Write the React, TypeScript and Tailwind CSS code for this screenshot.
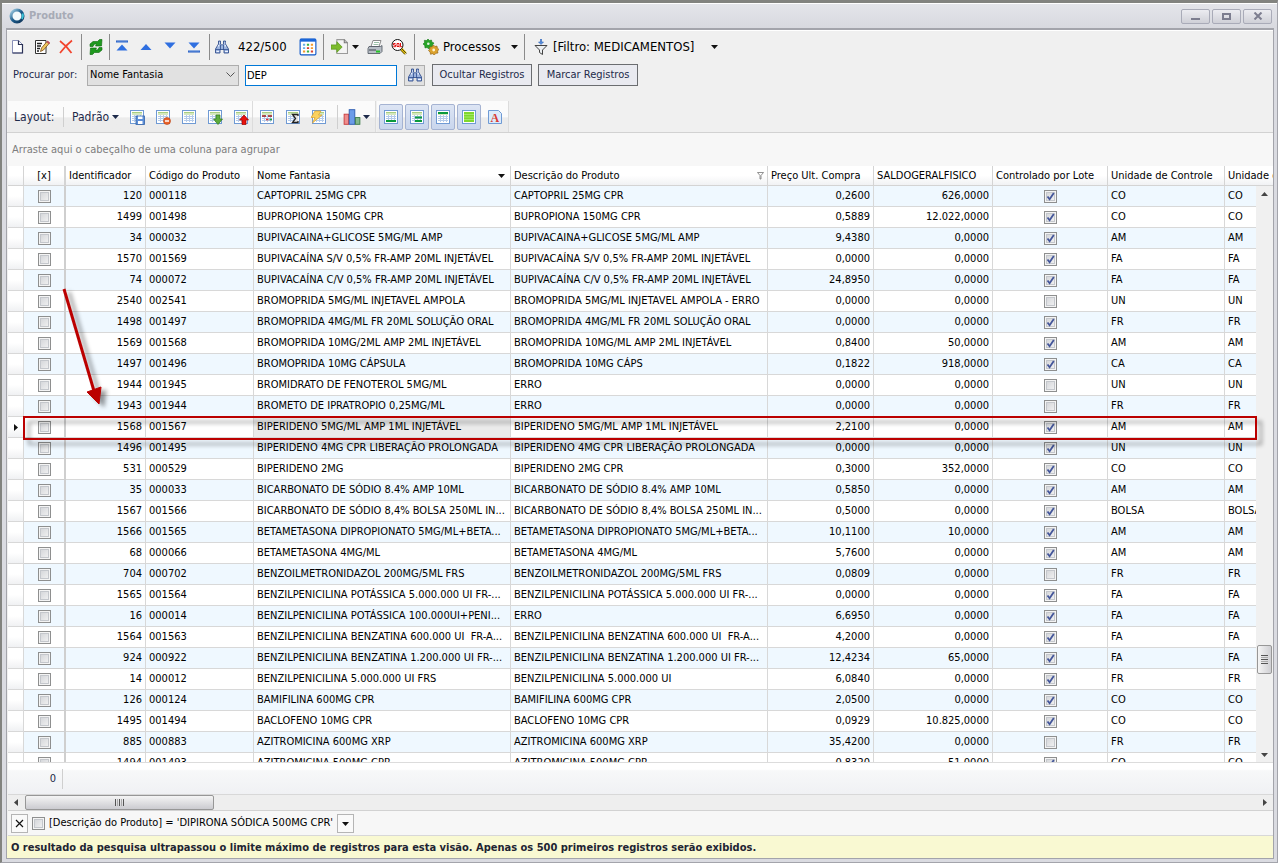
import { useState } from "react";
import type { ReactNode } from "react";

type Row = [id: string, code: string, name: string, desc: string, price: string, stock: string, lot: boolean, unit: string];

const rows: Row[] = [
  ["120", "000118", "CAPTOPRIL 25MG CPR", "CAPTOPRIL 25MG CPR", "0,2600", "626,0000", true, "CO"],
  ["1499", "001498", "BUPROPIONA 150MG CPR", "BUPROPIONA 150MG CPR", "0,5889", "12.022,0000", true, "CO"],
  ["34", "000032", "BUPIVACAINA+GLICOSE 5MG/ML AMP", "BUPIVACAINA+GLICOSE 5MG/ML AMP", "9,4380", "0,0000", true, "AM"],
  ["1570", "001569", "BUPIVACAÍNA S/V 0,5% FR-AMP 20ML INJETÁVEL", "BUPIVACAÍNA S/V 0,5% FR-AMP 20ML INJETÁVEL", "0,0000", "0,0000", true, "FA"],
  ["74", "000072", "BUPIVACAÍNA C/V 0,5% FR-AMP 20ML INJETÁVEL", "BUPIVACAÍNA C/V 0,5% FR-AMP 20ML INJETÁVEL", "24,8950", "0,0000", true, "FA"],
  ["2540", "002541", "BROMOPRIDA 5MG/ML INJETAVEL AMPOLA", "BROMOPRIDA 5MG/ML INJETAVEL AMPOLA - ERRO", "0,0000", "0,0000", false, "UN"],
  ["1498", "001497", "BROMOPRIDA 4MG/ML FR 20ML SOLUÇÃO ORAL", "BROMOPRIDA 4MG/ML FR 20ML SOLUÇÃO ORAL", "0,0000", "0,0000", true, "FR"],
  ["1569", "001568", "BROMOPRIDA 10MG/2ML AMP 2ML INJETÁVEL", "BROMOPRIDA 10MG/ML AMP 2ML INJETÁVEL", "0,8400", "50,0000", true, "AM"],
  ["1497", "001496", "BROMOPRIDA 10MG CÁPSULA", "BROMOPRIDA 10MG CÁPS", "0,1822", "918,0000", true, "CA"],
  ["1944", "001945", "BROMIDRATO DE FENOTEROL 5MG/ML", "ERRO", "0,0000", "0,0000", false, "UN"],
  ["1943", "001944", "BROMETO DE IPRATROPIO 0,25MG/ML", "ERRO", "0,0000", "0,0000", false, "FR"],
  ["1568", "001567", "BIPERIDENO 5MG/ML AMP 1ML INJETÁVEL", "BIPERIDENO 5MG/ML AMP 1ML INJETÁVEL", "2,2100", "0,0000", true, "AM"],
  ["1496", "001495", "BIPERIDENO 4MG CPR LIBERAÇÃO PROLONGADA", "BIPERIDENO 4MG CPR LIBERAÇÃO PROLONGADA", "0,0000", "0,0000", true, "UN"],
  ["531", "000529", "BIPERIDENO 2MG", "BIPERIDENO 2MG CPR", "0,3000", "352,0000", true, "CO"],
  ["35", "000033", "BICARBONATO DE SÓDIO 8.4% AMP 10ML", "BICARBONATO DE SÓDIO 8.4% AMP 10ML", "0,5850", "0,0000", true, "AM"],
  ["1567", "001566", "BICARBONATO DE SÓDIO 8,4% BOLSA 250ML IN...", "BICARBONATO DE SÓDIO 8,4% BOLSA 250ML IN...", "0,5000", "0,0000", true, "BOLSA"],
  ["1566", "001565", "BETAMETASONA DIPROPIONATO 5MG/ML+BETA...", "BETAMETASONA DIPROPIONATO 5MG/ML+BETA...", "10,1100", "10,0000", true, "AM"],
  ["68", "000066", "BETAMETASONA 4MG/ML", "BETAMETASONA 4MG/ML", "5,7600", "0,0000", true, "AM"],
  ["704", "000702", "BENZOILMETRONIDAZOL 200MG/5ML FRS", "BENZOILMETRONIDAZOL 200MG/5ML FRS", "0,0809", "0,0000", false, "FR"],
  ["1565", "001564", "BENZILPENICILINA POTÁSSICA 5.000.000 UI FR-...", "BENZILPENICILINA POTÁSSICA 5.000.000 UI FR-...", "0,0000", "0,0000", true, "FA"],
  ["16", "000014", "BENZILPENICILINA POTÁSSICA 100.000UI+PENI...", "ERRO", "6,6950", "0,0000", true, "FA"],
  ["1564", "001563", "BENZILPENICILINA BENZATINA 600.000 UI  FR-A...", "BENZILPENICILINA BENZATINA 600.000 UI  FR-A...", "4,2000", "0,0000", true, "FA"],
  ["924", "000922", "BENZILPENICILINA BENZATINA 1.200.000 UI FR-...", "BENZILPENICILINA BENZATINA 1.200.000 UI FR-...", "12,4234", "65,0000", true, "FA"],
  ["14", "000012", "BENZILPENICILINA 5.000.000 UI FRS", "BENZILPENICILINA 5.000.000 UI", "6,0840", "0,0000", true, "FR"],
  ["126", "000124", "BAMIFILINA 600MG CPR", "BAMIFILINA 600MG CPR", "2,0500", "0,0000", true, "CO"],
  ["1495", "001494", "BACLOFENO 10MG CPR", "BACLOFENO 10MG CPR", "0,0929", "10.825,0000", true, "CO"],
  ["885", "000883", "AZITROMICINA 600MG XRP", "AZITROMICINA 600MG XRP", "35,4200", "0,0000", false, "FR"],
  ["1494", "001493", "AZITROMICINA 500MG CPR", "AZITROMICINA 500MG CPR", "0,8320", "51,0000", true, "CO"],
];

const SELECTED_ID = "1568";

function Svg({ size = 16, children }: { size?: number; children: ReactNode }) {
  return (
    <svg width={size} height={size} viewBox="0 0 16 16" fill="none" className="shrink-0" aria-hidden="true">
      {children}
    </svg>
  );
}

function Caret({ dir = "down", color = "#111" }: { dir?: "down" | "up" | "left" | "right"; color?: string }) {
  const d = {
    down: "M0 2h7L3.5 6z",
    up: "M0 5h7L3.5 1z",
    left: "M5 0v7L1 3.5z",
    right: "M2 0v7l4-3.5z",
  }[dir];
  return (
    <svg width="7" height="7" viewBox="0 0 7 7" className="shrink-0" aria-hidden="true">
      <path d={d} fill={color} />
    </svg>
  );
}

function Check({ label, defaultChecked = false }: { label: string; defaultChecked?: boolean }) {
  return (
    <label className="inline-grid size-[13px] align-middle">
      <input
        type="checkbox"
        aria-label={label}
        defaultChecked={defaultChecked}
        className="peer col-start-1 row-start-1 m-0 size-[13px] appearance-none border border-[#8e8f8f] bg-linear-to-br from-[#cfd1d5] to-[#f6f6f6] shadow-[inset_0_0_0_1px_#f4f4f4,inset_0_0_0_2px_#c4c7cc]"
      />
      <svg viewBox="0 0 13 13" className="pointer-events-none invisible col-start-1 row-start-1 size-[13px] peer-checked:visible" aria-hidden="true">
        <path d="M3.5 6.500 5.600 9.300 9.800 3" fill="none" stroke="#44569a" strokeWidth="1.8" />
      </svg>
    </label>
  );
}

function Binoculars() {
  return (
    <Svg>
      <path d="M4.500 2h2v3l1 1h1l1-1V2h2v3l3 5v4h-4.500v-3.500H6V14H1.500v-4l3-5z" fill="#9db4de" stroke="#34508e" strokeWidth=".9" />
      <path d="M5 4h1M10.500 4h1M4 7.500l1-1.500M11.500 7.500l-.5-1.500M2.500 12.500h2.500M11 12.500h3" stroke="#eef4ff" strokeWidth="1.2" />
      <path d="M6.500 6v5M9.500 6v5M2 10.500h4M10 10.500h4" stroke="#2d4c8f" strokeWidth=".8" />
    </Svg>
  );
}

// Small spreadsheet used by most of the layout buttons
function Sheet({ children, rowColor = "#a9cf80" }: { children?: ReactNode; rowColor?: string }) {
  return (
    <Svg>
      <rect x="1.5" y="1.5" width="13" height="13" fill="#fff" stroke="#6f9ad4" />
      <path d="M3 3.500h10M3 5h10" stroke={rowColor} />
      <path d="M3 7.500h10M3 9.500h10M3 11.500h10M5.500 6v7M8.500 6v7M11.500 6v7" stroke="#b4cbea" />
      {children}
    </Svg>
  );
}

function Separator({ className }: { className: string }) {
  return <span className={`h-[26px] w-px shrink-0 bg-[#8b8b8b] ${className}`} />;
}

function ToolButton({ label, children, className = "w-6" }: { label: string; children: ReactNode; className?: string }) {
  return (
    <button type="button" aria-label={label} className={`flex h-6 shrink-0 items-center justify-center ${className}`}>
      {children}
    </button>
  );
}

function LayoutButton({ label, active = false, children }: { label: string; active?: boolean; children: ReactNode }) {
  return (
    <button
      type="button"
      aria-label={label}
      aria-pressed={active}
      className={`flex h-[26px] w-6 shrink-0 items-center justify-center ${
        active ? "rounded-xs border border-[#a5b3d2] bg-linear-to-b from-[#dde5f4] to-[#c9d6ed]" : ""
      }`}
    >
      {children}
    </button>
  );
}

function TitleBar() {
  const control = "flex h-[15px] w-[29px] items-center justify-center rounded-xs border border-[#a9abb8] bg-linear-to-b from-[#ececf1] to-[#cfd0d7]";
  return (
    <header className="flex h-[25px] shrink-0 items-center border-t border-white bg-linear-to-b from-[#e4e5ea] to-[#d8d9df] pr-[5px] pl-[7px]">
      <svg width="16" height="16" viewBox="0 0 16 16" aria-hidden="true">
        <defs>
          <linearGradient id="ring" x1="0" y1="0" x2="1" y2="1">
            <stop offset="0" stopColor="#a9d4e8" />
            <stop offset="0.5" stopColor="#1c5c8c" />
            <stop offset="1" stopColor="#0f3358" />
          </linearGradient>
        </defs>
        <circle cx="8" cy="8" r="6" fill="#f4fafc" stroke="url(#ring)" strokeWidth="3" />
        <path d="M13.5 5.500A6 6 0 0 1 13 11" stroke="#3dc4d8" strokeWidth="2" fill="none" />
      </svg>
      <h1 className="ml-1 flex-1 text-[11px] font-bold text-[#a7abb6]">Produto</h1>
      <div className="flex gap-0.5">
        <button type="button" aria-label="Minimizar" className={control}>
          <span className="mt-1.5 h-0.5 w-[9px] bg-[#7c7d8f]" />
        </button>
        <button type="button" aria-label="Maximizar" className={control}>
          <span className="h-[7px] w-[9px] border-2 border-[#7c7d8f]" />
        </button>
        <button type="button" aria-label="Fechar" className={control}>
          <svg width="10" height="8" viewBox="0 0 10 8" aria-hidden="true">
            <path d="M1.5.5l7 7M8.5.5l-7 7" stroke="#7c7d8f" strokeWidth="2" />
          </svg>
        </button>
      </div>
    </header>
  );
}

function MainToolbar() {
  return (
    <div className="flex h-8 shrink-0 items-center border-t border-white text-[13px] whitespace-nowrap text-black">
      <ToolButton label="Novo" className="w-[22px]">
        <Svg>
          <path d="M2.500 1.500h6l4 4v8.500h-10z" fill="#fff" stroke="#8990b8" />
          <path d="M8.500 1.500v4h4v8.500h-10" stroke="#2a3156" strokeWidth="1.2" />
        </Svg>
      </ToolButton>
      <ToolButton label="Editar" className="w-[26px]">
        <Svg>
          <path d="M1.5 1.500h10.500v13H1.500z" fill="#fff" stroke="#333" />
          <path d="M3 4.500h5M3 7h4M3 9.500h3M3 12h2" stroke="#222" strokeWidth="1.4" />
          <path d="M13 2.500 7.500 9l-1 3.500 3-1.500 6-7z" fill="#f0c860" stroke="#7a4b14" strokeWidth=".8" />
          <path d="m12.500 3 2.300 2.200 1.200-1.500L13.700 1.500z" fill="#c2505b" />
        </Svg>
      </ToolButton>
      <ToolButton label="Excluir" className="w-[22px]">
        <Svg>
          <path d="M2 2c4 3 8 7 11.500 12M14 1.500C9.500 5 5 10 2 14" stroke="#f2432c" strokeWidth="1.7" />
        </Svg>
      </ToolButton>
      <Separator className="ml-1" />
      <ToolButton label="Atualizar" className="w-[27px]">
        <Svg>
          <path d="M2 7.500V5L5 2.500h4.500L11.500.5H14L13.500 7H7.500L8.500 5H6.500L5 7.500z" fill="#1f9a1f" stroke="#0a650a" strokeWidth=".6" />
          <path d="M14 8.500V11L11 13.500H6.500L4.500 15.500H2L2.500 9H8.500L7.500 11H9.500L11 8.500z" fill="#1f9a1f" stroke="#0a650a" strokeWidth=".6" />
        </Svg>
      </ToolButton>
      <Separator className="" />
      <ToolButton label="Primeiro">
        <Svg>
          <path d="M2 2.500h12" stroke="#1b55c0" strokeWidth="2" />
          <path d="M2.500 3h11" stroke="#9cc0f4" strokeWidth=".7" />
          <path d="M8 5.500l5.500 6h-11z" fill="#2f6fe0" />
        </Svg>
      </ToolButton>
      <ToolButton label="Anterior">
        <Svg>
          <path d="M8 5l5.500 6h-11z" fill="#2f6fe0" />
        </Svg>
      </ToolButton>
      <ToolButton label="Próximo">
        <Svg>
          <path d="M8 9.500 2.500 3.500h11z" fill="#2f6fe0" />
        </Svg>
      </ToolButton>
      <ToolButton label="Último">
        <Svg>
          <path d="M2 12.500h12" stroke="#1b55c0" strokeWidth="2" />
          <path d="M2.500 12h11" stroke="#9cc0f4" strokeWidth=".7" />
          <path d="M8 9.500 2.500 3.500h11z" fill="#2f6fe0" />
        </Svg>
      </ToolButton>
      <Separator className="ml-[3px]" />
      <ToolButton label="Localizar">
        <Binoculars />
      </ToolButton>
      <span className="ml-1 w-[60px]">422/500</span>
      <ToolButton label="Colunas" className="w-5">
        <Svg size={18}>
          <rect x="1" y="1" width="14" height="14" rx="1" fill="#fff" stroke="#0a55c8" />
          <path d="M1 2h14" stroke="#1b66d8" strokeWidth="2.500" />
          <path d="M3.500 6h2M3.500 9h2" stroke="#66aee8" strokeWidth="1.700" />
          <path d="M7 6h2M7 12h2" stroke="#3cb043" strokeWidth="1.700" />
          <path d="M10.500 6h2M10.500 9h2M3.500 12h2" stroke="#f29a2e" strokeWidth="1.700" />
          <path d="M7 9h2M10.500 12h2" stroke="#d8402c" strokeWidth="1.700" />
        </Svg>
      </ToolButton>
      <Separator className="mr-1.5 ml-[5px]" />
      <ToolButton label="Exportar" className="w-[30px] gap-1">
        <Svg size={17}>
          <path d="M5.500 1.500h7l3 3v10h-10z" fill="#f4f4f4" stroke="#9a9a9a" />
          <path d="M12.500 1.500v3h3" stroke="#777" />
          <path d="M0 6.500h5.500v-3L10.500 8.500l-5 5v-3H0z" fill="#7cbb2c" stroke="#5b9a1c" strokeWidth=".7" />
        </Svg>
        <Caret />
      </ToolButton>
      <ToolButton label="Imprimir" className="ml-1 w-[22px]">
        <Svg>
          <path d="M6 1.500h8l-2 6H4z" fill="#fff" stroke="#8a8a8a" />
          <path d="M7 3.500h5M6.500 5.500h5" stroke="#9cc0a8" />
          <path d="M2 7.500h11.500l1.500-1v6l-2 2H1v-5z" fill="#b8bec6" stroke="#4a525c" strokeWidth=".8" />
          <path d="M2 11h7" stroke="#3d444c" />
          <path d="M9 12.500h4" stroke="#26c226" strokeWidth="2" />
        </Svg>
      </ToolButton>
      <ToolButton label="SQL" className="w-[26px]">
        <Svg>
          <path d="M10.500 10l4 4.500" stroke="#f0c800" strokeWidth="3" />
          <path d="M10.500 9.500l5 5M9.500 11l4.500 4.500" stroke="#222" strokeWidth=".8" />
          <circle cx="6.500" cy="6" r="5.500" fill="#fff" stroke="#111" />
          <path d="M4.500 4.500h-2v1.500h2v1.700H2.300M6 4.500h2v3H6zM7.500 7l1 1.300M9.500 4v3.700H11" stroke="#e01010" />
        </Svg>
      </ToolButton>
      <Separator className="mr-2 ml-0.5" />
      <button type="button" className="flex h-6 shrink-0 items-center gap-1">
        <Svg>
          <path d="M5 0l1.500 1.500 2-.5.3 2L11 4 9.500 6l.5 2-2.500.3L6 10 4 8.500 2 9l-.3-2.500L0 5l1.500-1.500L1.300 1.300l2.200.2z" fill="#27a327" stroke="#0d6e0d" strokeWidth=".5" />
          <path d="M10.500 6l1.500 1.500 2-.5.3 2 1.700 1.500-1.500 1.500.5 2-2.200.3L11.300 16l-1.800-1.300-2 .6-.4-2.100L5.500 11.500 7 10l-.3-2 2.200-.2z" fill="#dba12c" stroke="#8a5c10" strokeWidth=".6" />
          <circle cx="5.300" cy="4.800" r="1.300" fill="#dff5df" />
          <circle cx="10.700" cy="11" r="1.400" fill="#fff3d0" />
        </Svg>
        <span className="w-16 text-left">Processos</span>
        <Caret />
      </button>
      <Separator className="mr-2 ml-1.5" />
      <button type="button" className="flex h-6 shrink-0 items-center gap-1">
        <Svg>
          <path d="M7.500 0v3H5.500L8 5.500 10.500 3H8.500V0z" fill="#5c92e0" stroke="#2a62b8" strokeWidth=".6" />
          <path d="M2 6.500h12L9.500 11v4.500l-3-2V11z" fill="#eceff1" stroke="#444" />
        </Svg>
        <span className="w-[154px] text-left">[Filtro: MEDICAMENTOS]</span>
        <Caret />
      </button>
    </div>
  );
}

function SearchBar() {
  const [term, setTerm] = useState("DEP");
  return (
    <div className="mb-[13px] flex h-[26px] shrink-0 items-center pl-1.5 text-[11px]">
      <label htmlFor="field" className="w-[74px] whitespace-nowrap text-[#1e2a4a]">
        Procurar por:
      </label>
      <div className="grid w-[152px] items-center">
        <select id="field" className="col-start-1 row-start-1 h-[21px] appearance-none border border-[#adadad] bg-[#e1e1e1] pr-5 pl-0.5 text-black">
          <option>Nome Fantasia</option>
          <option>Descrição do Produto</option>
        </select>
        <svg width="9" height="6" viewBox="0 0 9 6" className="pointer-events-none col-start-1 row-start-1 mr-1 justify-self-end" aria-hidden="true">
          <path d="M.5.5l4 4 4-4" stroke="#555" fill="none" />
        </svg>
      </div>
      <input
        aria-label="Texto da pesquisa"
        value={term}
        onChange={(e) => setTerm(e.target.value)}
        className="ml-1.5 h-[21px] w-[152px] border border-[#0078d7] bg-white px-px text-black"
      />
      <button type="button" aria-label="Pesquisar" className="ml-[7px] flex size-[21px] items-center justify-center border border-[#adadad] bg-[#e1e1e1]">
        <Binoculars />
      </button>
      <button type="button" className="ml-[7px] h-[22px] w-[100px] border border-[#6b6d70] bg-[#e9eaf0] text-[#1e2a4a]">
        Ocultar Registros
      </button>
      <button type="button" className="ml-1.5 h-[22px] w-[100px] border border-[#6b6d70] bg-[#e9eaf0] text-[#1e2a4a]">
        Marcar Registros
      </button>
    </div>
  );
}

function LayoutBar() {
  const group = "flex items-center border-r border-[#dcdcdc] bg-linear-to-b from-[#fbfbfb] from-50% to-[#ececec] to-55%";
  return (
    <div className="flex h-8 shrink-0 border-b border-[#d2d2d2] pl-px text-[12px] text-[#1e2a4a]">
      <div className={`${group} w-[245px] gap-0.5 pl-1.5`}>
        <span className="w-[50px] shrink-0 border-r border-[#cfcfcf] leading-5">Layout:</span>
        <button type="button" className="mr-1 flex w-[53px] shrink-0 items-center justify-between pl-1.5">
          Padrão <Caret color="#1e2a4a" />
        </button>
        <LayoutButton label="Salvar layout">
          <Sheet>
            <rect x="7" y="7" width="8.500" height="8.500" fill="#5d8fd8" stroke="#3464a8" strokeWidth=".8" />
            <path d="M9 7.500h4.500v2.500H9zM9 12h4.500v3H9z" fill="#fff" />
          </Sheet>
        </LayoutButton>
        <LayoutButton label="Remover layout">
          <Sheet>
            <circle cx="12" cy="12" r="3.500" fill="#e8622a" stroke="#b84010" strokeWidth=".6" />
            <path d="M10 12h4" stroke="#fff" strokeWidth="1.5" />
          </Sheet>
        </LayoutButton>
        <LayoutButton label="Restaurar layout">
          <Sheet />
        </LayoutButton>
        <LayoutButton label="Importar layout">
          <Sheet>
            <path d="M9 6h4v4h2.500L11 15.500 6.500 10H9z" fill="#5dac3c" stroke="#2f7a1a" strokeWidth=".7" />
          </Sheet>
        </LayoutButton>
        <LayoutButton label="Exportar layout">
          <Sheet>
            <path d="M9 15.500h4V11h2.500L11 6 6.500 11H9z" fill="#e8120c" stroke="#900" strokeWidth=".7" />
          </Sheet>
        </LayoutButton>
      </div>
      <div className={`${group} w-[123px] gap-0.5 pl-0.5`}>
        <LayoutButton label="Formatação condicional">
          <Sheet>
            <path d="M3 7h4M9 7h4" stroke="#a01818" strokeWidth="1.4" />
            <path d="M7 10.500h2.500" stroke="#e03030" strokeWidth="1.6" />
            <path d="M10.500 10.500H13" stroke="#1f9e3c" strokeWidth="1.6" />
          </Sheet>
        </LayoutButton>
        <LayoutButton label="Totalizadores">
          <Sheet>
            <path d="M13 7V5.500H7.500L10.500 9.500l-3 4H13V12" fill="#e4e4e4" stroke="#222" strokeWidth="1.3" />
          </Sheet>
        </LayoutButton>
        <LayoutButton label="Filtro rápido">
          <Sheet>
            <path d="M4 2h6L7.500 6H11L1.500 14 4 8.500H0z" fill="#fbd160" stroke="#d9a02c" strokeWidth=".7" />
          </Sheet>
        </LayoutButton>
        <span className="ml-1 h-6 w-px bg-[#cfcfcf]" />
        <button type="button" aria-label="Gráfico" className="ml-[3px] flex items-center gap-0.5">
          <Svg size={18}>
            <rect x="1" y="5.500" width="4" height="9" fill="#ef8c8c" stroke="#c83c3c" strokeWidth=".8" />
            <rect x="5.500" y="1.500" width="5" height="13" fill="#6c9ce8" stroke="#2c5cb0" strokeWidth=".8" />
            <rect x="11" y="8.500" width="4" height="6" fill="#84b88c" stroke="#3c7c48" strokeWidth=".8" />
          </Svg>
          <Caret color="#1e2a4a" />
        </button>
      </div>
      <div className={`${group} ml-px w-[132px] gap-0.5 pl-0.5`}>
        <LayoutButton label="Rodapé" active>
          <Sheet>
            <path d="M3 12h10" stroke="#0a9a3c" strokeWidth="2" />
          </Sheet>
        </LayoutButton>
        <LayoutButton label="Rodapé de grupo" active>
          <Sheet>
            <path d="M6 8.500h7M6 12h7" stroke="#0a9a3c" strokeWidth="2" />
          </Sheet>
        </LayoutButton>
        <LayoutButton label="Painel de grupo" active>
          <Sheet>
            <path d="M3 4h10" stroke="#0a9a3c" strokeWidth="2" />
          </Sheet>
        </LayoutButton>
        <LayoutButton label="Zebrado" active>
          <Svg>
            <rect x="1.5" y="1.5" width="13" height="13" fill="#fff" stroke="#6f9ad4" />
            <rect x="3" y="3" width="10" height="10" fill="#7fd82c" />
            <path d="M3 5.500h10M3 8h10M3 10.500h10" stroke="#a4e868" />
          </Svg>
        </LayoutButton>
        <LayoutButton label="Fonte">
          <Svg>
            <path d="M1.500 1.500h10l3 3v10h-13z" fill="#dcebfb" stroke="#6f9ad4" />
            <text x="3.500" y="13" fontSize="12" fontWeight="700" fontFamily="Liberation Serif, serif" fill="#d83a34">
              A
            </text>
          </Svg>
        </LayoutButton>
      </div>
    </div>
  );
}

function ScrollArrow({ label, dir, className }: { label: string; dir: "up" | "down" | "left" | "right"; className: string }) {
  return (
    <button type="button" aria-label={label} className={`flex shrink-0 items-center justify-center ${className}`}>
      <Caret dir={dir} color="#444" />
    </button>
  );
}

function ProductGrid() {
  const head = "overflow-hidden border-r border-b border-[#d4d4d4] bg-linear-to-b from-white from-50% to-[#f1f2f4] px-[3px] text-left font-normal";
  const cell = "overflow-hidden border-r border-b border-[#d8d8d8] px-[3px]";

  return (
    <div className="relative ml-px min-h-0 flex-1 overflow-hidden border-b border-[#dcdcdc] bg-white">
      <table className="w-[1362px] table-fixed border-separate border-spacing-0 text-[11px] leading-4 whitespace-pre text-black">
        <colgroup>
          <col className="w-[16px]" />
          <col className="w-[42px]" />
          <col className="w-[80px]" />
          <col className="w-[108px]" />
          <col className="w-[257px]" />
          <col className="w-[257px]" />
          <col className="w-[106px]" />
          <col className="w-[119px]" />
          <col className="w-[115px]" />
          <col className="w-[117px]" />
          <col />
        </colgroup>
        <thead>
          <tr className="h-5">
            <th className={head} />
            <th className="border-r-2 border-b border-[#d4d4d4] bg-linear-to-b from-white from-50% to-[#f1f2f4] p-0 text-center font-normal">[x]</th>
            <th className={head}>Identificador</th>
            <th className={head}>Código do Produto</th>
            <th className={head}>
              <span className="flex items-center justify-between pr-0.5">
                Nome Fantasia <Caret />
              </span>
            </th>
            <th className={head}>
              <span className="flex items-center justify-between">
                Descrição do Produto
                <svg width="7" height="8" viewBox="0 0 7 8" aria-hidden="true">
                  <path d="M.5.5h6L4 3.500V7H3V3.500z" fill="#fff" stroke="#777" strokeWidth=".8" />
                </svg>
              </span>
            </th>
            <th className={head}>Preço Ult. Compra</th>
            <th className={head}>SALDOGERALFISICO</th>
            <th className={head}>Controlado por Lote</th>
            <th className={head}>Unidade de Controle</th>
            <th className={head}>Unidade de Compra</th>
          </tr>
        </thead>
        <tbody>
          {rows.map(([id, code, name, desc, price, stock, lot, unit]) => {
            const selected = id === SELECTED_ID;
            return (
              <tr key={id} className="h-[21px] odd:bg-[#eff8ff]">
                <td className="border-r border-b border-[#d8d8d8] bg-linear-to-b from-white from-50% to-[#f0f1f3] p-0">
                  {selected && (
                    <span className="flex justify-center">
                      <Caret dir="right" />
                    </span>
                  )}
                </td>
                <td className="border-r-2 border-b border-[#cfcfcf] p-0 text-center leading-none">
                  <Check label={`Selecionar ${id}`} />
                </td>
                <td className={`${cell} text-right`}>{id}</td>
                <td className={cell}>{code}</td>
                <td className={`${cell} ${selected ? "bg-[#ebebeb]" : ""}`}>{name}</td>
                <td className={cell}>{desc}</td>
                <td className={`${cell} text-right`}>{price}</td>
                <td className={`${cell} text-right`}>{stock}</td>
                <td className="border-r border-b border-[#d8d8d8] p-0 text-center leading-none">
                  <Check label={`Controlado por lote ${id}`} defaultChecked={lot} />
                </td>
                <td className={cell}>{unit}</td>
                <td className={cell}>{unit}</td>
              </tr>
            );
          })}
        </tbody>
      </table>

      {/* Vertical scroll bar */}
      <div className="absolute top-5 right-0 bottom-0 flex w-[17px] flex-col items-center bg-[#f0f0f0]">
        <ScrollArrow label="Rolar para cima" dir="up" className="h-4 w-full" />
        <span className="flex-[86]" />
        <span className="flex h-[29px] w-[15px] flex-col items-center justify-center gap-px rounded-xs border border-[#979797] bg-linear-to-r from-[#f5f5f5] to-[#cfcfd3]">
          <span className="h-px w-[7px] bg-[#555]" />
          <span className="h-px w-[7px] bg-[#aaa]" />
          <span className="h-px w-[7px] bg-[#555]" />
          <span className="h-px w-[7px] bg-[#aaa]" />
          <span className="h-px w-[7px] bg-[#555]" />
        </span>
        <span className="flex-[14]" />
        <ScrollArrow label="Rolar para baixo" dir="down" className="h-4 w-full" />
      </div>

      {/* Frame round the current record and the arrow that points to it */}
      <div className="pointer-events-none absolute top-[250px] right-4 left-[15px] h-6 border-2 border-[#bb0000] drop-shadow-[5px_5px_2px_rgba(0,0,0,0.4)]" />
      <svg width="60" height="130" viewBox="0 0 60 130" className="pointer-events-none absolute top-[116px] left-[48px] drop-shadow-[5px_3px_2px_rgba(0,0,0,0.4)]" aria-hidden="true">
        <path d="M8 7 38 109" stroke="#bb0000" strokeWidth="3" />
        <path d="M43 122 31 110 45 105z" fill="#bb0000" stroke="#bb0000" />
      </svg>
    </div>
  );
}

function GridFooter() {
  return (
    <div className="ml-px shrink-0 text-[11px] text-[#1e2a4a]">
      <div className="flex h-8 items-center border-b border-[#d8d8d8] bg-linear-to-b from-white from-20% via-[#f7f8f9] via-25% to-[#f0f1f4]">
        <span className="h-5 w-[55px] border-r border-[#cfcfcf] pr-1.5 text-right leading-5">0</span>
      </div>
      <div className="flex h-4 items-center border-b border-[#d2d2d2] bg-[#eeeeee]">
        <ScrollArrow label="Rolar para a esquerda" dir="left" className="h-full w-[17px]" />
        <span className="flex h-[15px] w-[189px] items-center justify-center gap-px rounded-xs border border-[#979797] bg-linear-to-b from-[#f5f5f5] to-[#cbcbd0]">
          <span className="h-[7px] w-px bg-[#555]" />
          <span className="h-[7px] w-px bg-[#aaa]" />
          <span className="h-[7px] w-px bg-[#555]" />
          <span className="h-[7px] w-px bg-[#aaa]" />
          <span className="h-[7px] w-px bg-[#555]" />
        </span>
        <span className="flex-1" />
        <ScrollArrow label="Rolar para a direita" dir="right" className="h-full w-[17px]" />
      </div>
      <div className="flex h-[25px] items-center border-b border-[#d8d8d8] bg-[#f7f7f7] pl-[3px] text-black">
        <button type="button" aria-label="Remover filtro" className="mr-1 flex h-[19px] w-[17px] items-center justify-center border border-[#b5b5b5] bg-[#fafafa]">
          <svg width="9" height="9" viewBox="0 0 9 9" aria-hidden="true">
            <path d="M1 1l7 7M8 1 1 8" stroke="#111" strokeWidth="1.2" />
          </svg>
        </button>
        <Check label="Ativar filtro" />
        <span className="mx-1 whitespace-nowrap">[Descrição do Produto] = 'DIPIRONA SÓDICA 500MG CPR'</span>
        <button type="button" aria-label="Filtros recentes" className="flex h-[19px] w-[17px] items-center justify-center border border-[#b5b5b5] bg-[#fafafa]">
          <Caret />
        </button>
      </div>
    </div>
  );
}

export default function App() {
  return (
    <div className="h-screen bg-white pr-0.5 pb-0.5 font-['DejaVu_Sans_Condensed','DejaVu_Sans',sans-serif]">
      <div className="flex h-full flex-col border-t-3 border-r border-b border-l-2 border-[#a3a4ab] border-t-[#82837f] border-l-[#82837f] bg-[#dadbe1]">
        <TitleBar />
        <main className="mr-[3px] mb-[3px] ml-1 flex min-h-0 flex-1 flex-col border border-t-2 border-[#a3a4ab] bg-[#f0f0f0]">
          <MainToolbar />
          <SearchBar />
          <LayoutBar />
          <p className="h-[33px] shrink-0 bg-[#f7f7f7] pl-[5px] text-[11px] leading-[34px] text-[#7d7d7d]">Arraste aqui o cabeçalho de uma coluna para agrupar</p>
          <ProductGrid />
          <GridFooter />
          <p className="h-[22px] shrink-0 truncate bg-[#f9f9d2] px-1 text-[11px] leading-6 font-bold text-[#1e2432]">
            O resultado da pesquisa ultrapassou o limite máximo de registros para esta visão. Apenas os 500 primeiros registros serão exibidos.
          </p>
        </main>
      </div>
    </div>
  );
}
